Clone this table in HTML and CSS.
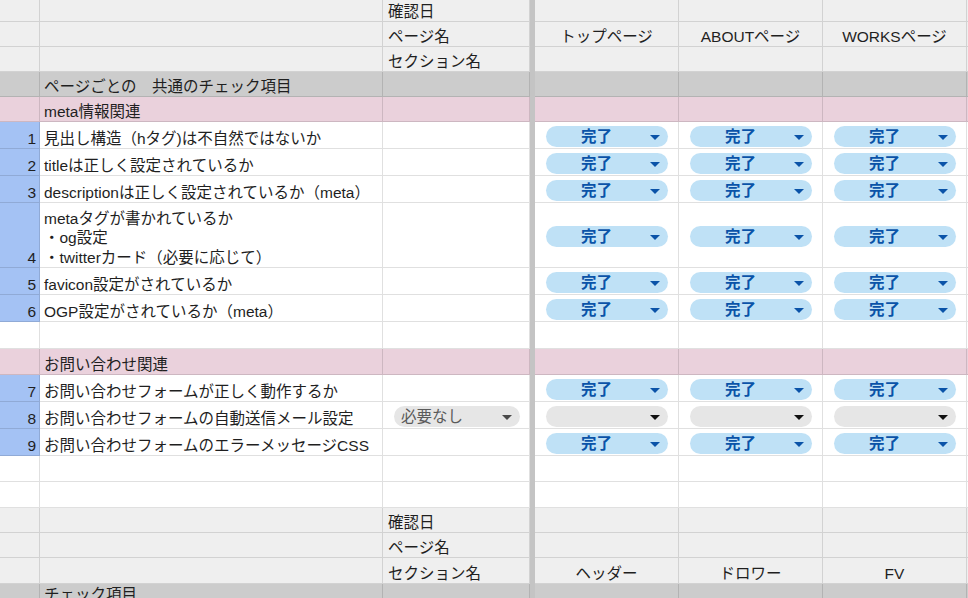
FILE: index.html
```html
<!DOCTYPE html>
<html lang="ja">
<head>
<meta charset="utf-8">
<title>チェックシート</title>
<link rel="stylesheet" href="styles.css">
</head>
<body>
<div class="sheet">
  <div class="row hdr h22">
    <div class="c num"></div><div class="c b"></div><div class="c cc"><span class="t">確認日</span></div><div class="div"></div>
    <div class="c"></div><div class="c"></div><div class="c"></div><div class="c g"></div>
  </div>
  <div class="row hdr h25">
    <div class="c num"></div><div class="c b"></div><div class="c cc"><span class="t">ページ名</span></div><div class="div"></div>
    <div class="c ctr"><span class="t">トップページ</span></div><div class="c ctr"><span class="t">ABOUTページ</span></div><div class="c ctr"><span class="t">WORKSページ</span></div><div class="c g"></div>
  </div>
  <div class="row hdr h25">
    <div class="c num"></div><div class="c b"></div><div class="c cc"><span class="t">セクション名</span></div><div class="div"></div>
    <div class="c"></div><div class="c"></div><div class="c"></div><div class="c g"></div>
  </div>
  <div class="row sec h25">
    <div class="c num"></div><div class="c b"><span class="t">ページごとの　共通のチェック項目</span></div><div class="c cc"></div><div class="div"></div>
    <div class="c"></div><div class="c"></div><div class="c"></div><div class="c g"></div>
  </div>
  <div class="row cat h25">
    <div class="c num"></div><div class="c b"><span class="t">meta情報関連</span></div><div class="c cc"></div><div class="div"></div>
    <div class="c"></div><div class="c"></div><div class="c"></div><div class="c g"></div>
  </div>

  <div class="row data h27">
    <div class="c num"><span class="t">1</span></div><div class="c b"><span class="t">見出し構造（hタグ)は不自然ではないか</span></div><div class="c cc"></div><div class="div"></div>
    <div class="c ch"><div class="chip done"><span class="lbl">完了</span><span class="arr"></span></div></div>
    <div class="c ch"><div class="chip done"><span class="lbl">完了</span><span class="arr"></span></div></div>
    <div class="c ch"><div class="chip done"><span class="lbl">完了</span><span class="arr"></span></div></div>
    <div class="c g"></div>
  </div>
  <div class="row data h27">
    <div class="c num"><span class="t">2</span></div><div class="c b"><span class="t">titleは正しく設定されているか</span></div><div class="c cc"></div><div class="div"></div>
    <div class="c ch"><div class="chip done"><span class="lbl">完了</span><span class="arr"></span></div></div>
    <div class="c ch"><div class="chip done"><span class="lbl">完了</span><span class="arr"></span></div></div>
    <div class="c ch"><div class="chip done"><span class="lbl">完了</span><span class="arr"></span></div></div>
    <div class="c g"></div>
  </div>
  <div class="row data h27">
    <div class="c num"><span class="t">3</span></div><div class="c b"><span class="t">descriptionは正しく設定されているか（meta）</span></div><div class="c cc"></div><div class="div"></div>
    <div class="c ch"><div class="chip done"><span class="lbl">完了</span><span class="arr"></span></div></div>
    <div class="c ch"><div class="chip done"><span class="lbl">完了</span><span class="arr"></span></div></div>
    <div class="c ch"><div class="chip done"><span class="lbl">完了</span><span class="arr"></span></div></div>
    <div class="c g"></div>
  </div>
  <div class="row data h65">
    <div class="c num"><span class="t">4</span></div><div class="c b"><span class="t multi">metaタグが書かれているか<br>・og設定<br>・twitterカード（必要に応じて）</span></div><div class="c cc"></div><div class="div"></div>
    <div class="c ch"><div class="chip done"><span class="lbl">完了</span><span class="arr"></span></div></div>
    <div class="c ch"><div class="chip done"><span class="lbl">完了</span><span class="arr"></span></div></div>
    <div class="c ch"><div class="chip done"><span class="lbl">完了</span><span class="arr"></span></div></div>
    <div class="c g"></div>
  </div>
  <div class="row data h27">
    <div class="c num"><span class="t">5</span></div><div class="c b"><span class="t">favicon設定がされているか</span></div><div class="c cc"></div><div class="div"></div>
    <div class="c ch"><div class="chip done"><span class="lbl">完了</span><span class="arr"></span></div></div>
    <div class="c ch"><div class="chip done"><span class="lbl">完了</span><span class="arr"></span></div></div>
    <div class="c ch"><div class="chip done"><span class="lbl">完了</span><span class="arr"></span></div></div>
    <div class="c g"></div>
  </div>
  <div class="row data h27">
    <div class="c num"><span class="t">6</span></div><div class="c b"><span class="t">OGP設定がされているか（meta）</span></div><div class="c cc"></div><div class="div"></div>
    <div class="c ch"><div class="chip done"><span class="lbl">完了</span><span class="arr"></span></div></div>
    <div class="c ch"><div class="chip done"><span class="lbl">完了</span><span class="arr"></span></div></div>
    <div class="c ch"><div class="chip done"><span class="lbl">完了</span><span class="arr"></span></div></div>
    <div class="c g"></div>
  </div>
  <div class="row blank h27">
    <div class="c num"></div><div class="c b"></div><div class="c cc"></div><div class="div"></div>
    <div class="c"></div><div class="c"></div><div class="c"></div><div class="c g"></div>
  </div>
  <div class="row cat h26">
    <div class="c num"></div><div class="c b"><span class="t">お問い合わせ関連</span></div><div class="c cc"></div><div class="div"></div>
    <div class="c"></div><div class="c"></div><div class="c"></div><div class="c g"></div>
  </div>
  <div class="row data h27">
    <div class="c num"><span class="t">7</span></div><div class="c b"><span class="t">お問い合わせフォームが正しく動作するか</span></div><div class="c cc"></div><div class="div"></div>
    <div class="c ch"><div class="chip done"><span class="lbl">完了</span><span class="arr"></span></div></div>
    <div class="c ch"><div class="chip done"><span class="lbl">完了</span><span class="arr"></span></div></div>
    <div class="c ch"><div class="chip done"><span class="lbl">完了</span><span class="arr"></span></div></div>
    <div class="c g"></div>
  </div>
  <div class="row data h27">
    <div class="c num"><span class="t">8</span></div><div class="c b"><span class="t">お問い合わせフォームの自動送信メール設定</span></div>
    <div class="c ch cch"><div class="chip none"><span class="lbl">必要なし</span><span class="arr"></span></div></div><div class="div"></div>
    <div class="c ch"><div class="chip empty"><span class="lbl"></span><span class="arr"></span></div></div>
    <div class="c ch"><div class="chip empty"><span class="lbl"></span><span class="arr"></span></div></div>
    <div class="c ch"><div class="chip empty"><span class="lbl"></span><span class="arr"></span></div></div>
    <div class="c g"></div>
  </div>
  <div class="row data h27">
    <div class="c num"><span class="t">9</span></div><div class="c b"><span class="t">お問い合わせフォームのエラーメッセージCSS</span></div><div class="c cc"></div><div class="div"></div>
    <div class="c ch"><div class="chip done"><span class="lbl">完了</span><span class="arr"></span></div></div>
    <div class="c ch"><div class="chip done"><span class="lbl">完了</span><span class="arr"></span></div></div>
    <div class="c ch"><div class="chip done"><span class="lbl">完了</span><span class="arr"></span></div></div>
    <div class="c g"></div>
  </div>
  <div class="row blank h26">
    <div class="c num"></div><div class="c b"></div><div class="c cc"></div><div class="div"></div>
    <div class="c"></div><div class="c"></div><div class="c"></div><div class="c g"></div>
  </div>
  <div class="row blank h26">
    <div class="c num"></div><div class="c b"></div><div class="c cc"></div><div class="div"></div>
    <div class="c"></div><div class="c"></div><div class="c"></div><div class="c g"></div>
  </div>
  <div class="row hdr h25">
    <div class="c num"></div><div class="c b"></div><div class="c cc"><span class="t">確認日</span></div><div class="div"></div>
    <div class="c"></div><div class="c"></div><div class="c"></div><div class="c g"></div>
  </div>
  <div class="row hdr h25">
    <div class="c num"></div><div class="c b"></div><div class="c cc"><span class="t">ページ名</span></div><div class="div"></div>
    <div class="c"></div><div class="c"></div><div class="c"></div><div class="c g"></div>
  </div>
  <div class="row hdr h26">
    <div class="c num"></div><div class="c b"></div><div class="c cc"><span class="t">セクション名</span></div><div class="div"></div>
    <div class="c ctr"><span class="t">ヘッダー</span></div><div class="c ctr"><span class="t">ドロワー</span></div><div class="c ctr"><span class="t">FV</span></div><div class="c g"></div>
  </div>
  <div class="row sec h30">
    <div class="c num"></div><div class="c b"><span class="t top">チェック項目</span></div><div class="c cc"></div><div class="div"></div>
    <div class="c"></div><div class="c"></div><div class="c"></div><div class="c g"></div>
  </div>
</div>
</body>
</html>
```

FILE: styles.css
```css
html, body {
  margin: 0;
  padding: 0;
  overflow: hidden;
  background: #ffffff;
}

.sheet {
  width: 990px;
  font-family: "Liberation Sans", "Noto Sans CJK JP", sans-serif;
  font-size: 15.5px;
  color: #1f1f1f;
}

.row {
  display: grid;
  grid-template-columns: 40px 343px 147px 5px 144px 144px 144px 1fr;
}

.h22 { height: 22px; }
.h25 { height: 25px; }
.h26 { height: 26px; }
.h27 { height: 27px; }
.h30 { height: 30px; }
.h65 { height: 65px; }

.hdr { background: #efefef; }
.sec { background: #cccccc; }
.cat { background: #ead1dc; }
.data, .blank { background: #ffffff; }

.c {
  box-sizing: border-box;
  border-right: 1px solid rgba(0, 0, 0, 0.12);
  border-bottom: 1px solid rgba(0, 0, 0, 0.12);
  display: flex;
  align-items: flex-end;
  padding: 0 4px;
  overflow: hidden;
  white-space: nowrap;
  min-width: 0;
}

.div {
  background: #c4c4c4;
}

.num {
  justify-content: flex-end;
  padding-right: 3px;
}

.data .num { background: #a4c2f4; }

.cc { padding-left: 5px; }

.ctr { justify-content: center; }

.t {
  display: block;
  line-height: 19px;
  margin-bottom: 0;
}

.t.multi {
  line-height: 19.5px;
  margin-bottom: 0;
}

.t.top {
  align-self: flex-start;
  margin-top: 1px;
}

.ch {
  align-items: center;
  padding: 3px 10px 0 11px;
}

.cch { padding: 3px 9px 0 11px; }

.chip {
  flex: 1;
  height: 21px;
  border-radius: 11px;
  display: flex;
  align-items: center;
  padding-right: 8px;
  box-sizing: border-box;
}

.chip .lbl {
  flex: 1;
  line-height: 21px;
  font-size: 15.5px;
}

.chip .arr {
  width: 0;
  height: 0;
  border-left: 5px solid transparent;
  border-right: 5px solid transparent;
  border-top: 5px solid currentColor;
  margin-top: 1px;
}

.chip.done {
  background: #bfe1f6;
  color: #0a53a8;
}

.chip.done .lbl {
  text-align: center;
  font-weight: bold;
  padding-right: 3px;
}

.chip.none {
  background: #e6e6e6;
  color: #5a5a5a;
  padding-left: 7px;
}

.chip.none .arr { color: #4a4a4a; }

.chip.empty {
  background: #e6e6e6;
  color: #111111;
}
```
